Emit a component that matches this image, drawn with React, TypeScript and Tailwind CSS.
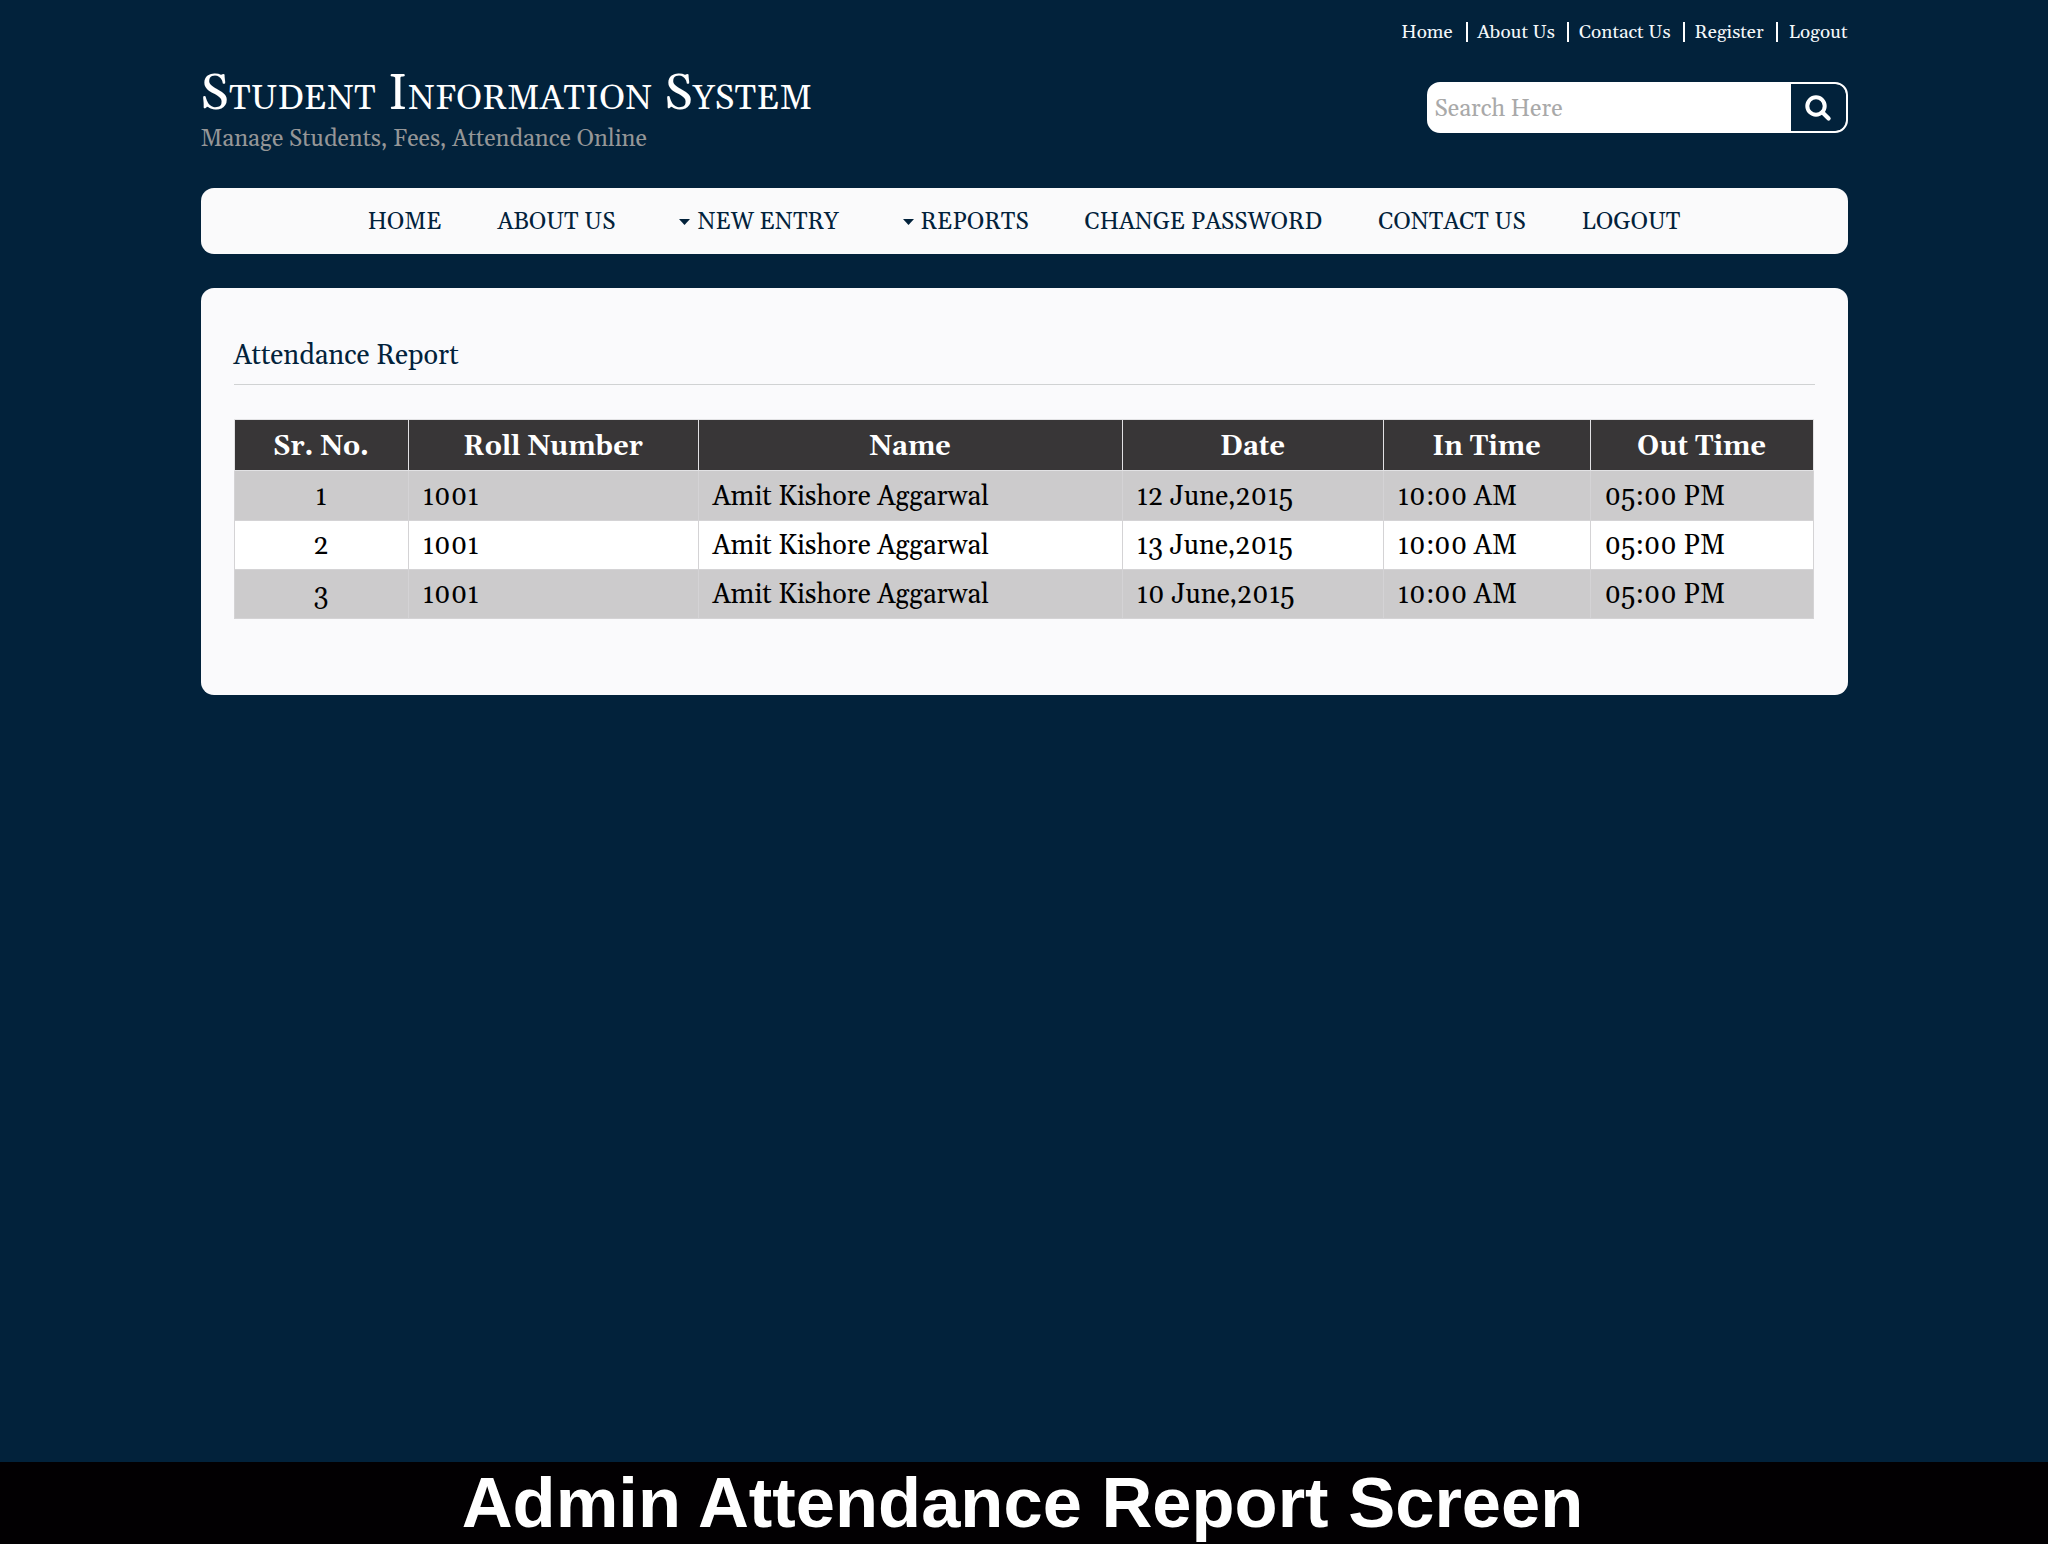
import React from "react";

const topLinks = ["Home", "About Us", "Contact Us", "Register", "Logout"];

const navItems = [
  { label: "HOME" },
  { label: "ABOUT US" },
  { label: "NEW ENTRY", menu: true },
  { label: "REPORTS", menu: true },
  { label: "CHANGE PASSWORD" },
  { label: "CONTACT US" },
  { label: "LOGOUT" },
];

const columns = ["Sr. No.", "Roll Number", "Name", "Date", "In Time", "Out Time"];

const records = [
  ["1", "1001", "Amit Kishore Aggarwal", "12 June,2015", "10:00 AM", "05:00 PM"],
  ["2", "1001", "Amit Kishore Aggarwal", "13 June,2015", "10:00 AM", "05:00 PM"],
  ["3", "1001", "Amit Kishore Aggarwal", "10 June,2015", "10:00 AM", "05:00 PM"],
];

function TopLinks() {
  return (
    <ul className="flex h-5 items-center text-[18.9px] leading-5 text-[#f4f8fa]">
      {topLinks.map((label, i) => (
        <li
          key={label}
          className={
            i === 0
              ? "flex h-5 items-center pr-[13px]"
              : i === topLinks.length - 1
                ? "flex h-5 items-center border-l-2 border-white pl-[10.5px]"
                : "flex h-5 items-center border-l-2 border-white pr-[12.5px] pl-[9.5px]"
          }
        >
          <a>{label}</a>
        </li>
      ))}
    </ul>
  );
}

function SearchBox() {
  return (
    <div className="flex h-[51px] w-[421px] overflow-hidden rounded-[13px] border-2 border-white bg-white">
      <div className="flex flex-1 items-center pt-[2px] pl-[6px] text-[23.6px] leading-8 text-[#a9a9a9]">
        Search Here
      </div>
      <button className="flex w-[55px] items-center justify-center rounded-r-[10px] bg-[#02223b]">
        <svg width="28" height="28" viewBox="0 0 28 28" fill="none" stroke="white">
          <circle cx="12" cy="12" r="8.7" strokeWidth="4" />
          <path d="M18.3 18.3 L24.6 24.6" strokeWidth="4.2" strokeLinecap="round" />
        </svg>
      </button>
    </div>
  );
}

function NavBar() {
  return (
    <nav className="mt-[34px] flex h-[66px] items-center justify-center rounded-[13px] bg-[#fafafb] pt-px text-[23.55px] leading-8 text-[#02223b]">
      {navItems.map((item) => (
        <a key={item.label} className="flex items-center px-7 whitespace-nowrap">
          {item.menu && (
            <svg className="mr-[7px] ml-2" width="11" height="6" viewBox="0 0 11 6" fill="currentColor">
              <path d="M0 0 H11 L5.5 6 Z" />
            </svg>
          )}
          {item.label}
        </a>
      ))}
    </nav>
  );
}

function AttendanceTable() {
  return (
    <table className="mt-[34px] w-[1580px] table-fixed border-collapse border border-[#d2d2d4] text-[27px] leading-8">
      <colgroup>
        <col className="w-[174px]" />
        <col className="w-[290px]" />
        <col className="w-[424px]" />
        <col className="w-[261px]" />
        <col className="w-[207px]" />
        <col className="w-[223px]" />
      </colgroup>
      <thead>
        <tr className="h-[51px] bg-[#383637] text-white">
          {columns.map((c) => (
            <th key={c} className="border border-[#e2e2e4] px-0 pt-[3px] pb-0 text-center font-bold">
              {c}
            </th>
          ))}
        </tr>
      </thead>
      <tbody>
        {records.map((row, r) => (
          <tr
            key={r}
            className={
              r === 1 ? "h-[49px] bg-white" : r === 0 ? "h-[50px] bg-[#cccbcc]" : "h-[49px] bg-[#cccbcc]"
            }
          >
            {row.map((cell, c) => (
              <td
                key={c}
                className={
                  c === 0
                    ? "border border-[#d4d3d5] px-0 pt-[2px] pb-0 text-center text-black"
                    : "border border-[#d4d3d5] pt-[2px] pr-0 pb-0 pl-[14px] text-left text-black"
                }
              >
                {cell}
              </td>
            ))}
          </tr>
        ))}
      </tbody>
    </table>
  );
}

export default function App() {
  return (
    <div className="flex h-[1544px] w-[2048px] flex-col bg-[#02223b] font-['Gelasio','Georgia','Liberation_Serif',serif]">
      <div className="mx-auto w-[1647px] flex-1">
        <header className="flex h-[154px] justify-between">
          <div className="pt-[64px]">
            <h1 className="text-[50.4px] leading-[60px] tracking-[0.18px] whitespace-nowrap text-white [font-variant-caps:small-caps]">
              Student Information System
            </h1>
            <p className="-mt-px text-[23.55px] leading-8 text-[#959697]">Manage Students, Fees, Attendance Online</p>
          </div>
          <div className="flex flex-col items-end gap-10 pt-[22px]">
            <TopLinks />
            <SearchBox />
          </div>
        </header>
        <NavBar />
        <main className="mt-[34px] h-[407px] rounded-[13px] bg-[#fafafc] px-[33px] pt-12">
          <h2 className="h-[49px] border-b border-[#d0d2d3] text-[27px] leading-10 text-[#02223b]">
            Attendance Report
          </h2>
          <AttendanceTable />
        </main>
      </div>
      <footer className="flex h-[82px] items-center justify-center bg-[#020002] pr-[3px] font-['Liberation_Sans',sans-serif] text-[70.5px] font-bold whitespace-nowrap text-white">
        Admin Attendance Report Screen
      </footer>
    </div>
  );
}
